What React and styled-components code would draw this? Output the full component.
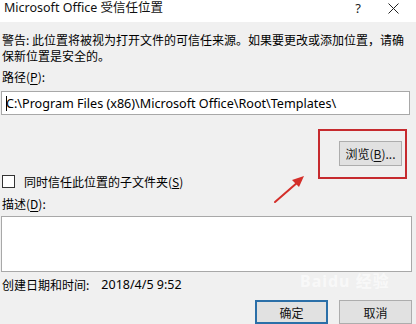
import React from "react";
import styled, { createGlobalStyle } from "styled-components";

const Global = createGlobalStyle`
  html, body { margin: 0; padding: 0; background: #f0f0f0; }
  body { font-family: "Noto Sans", "Noto Sans CJK SC", sans-serif; }
`;

const CJK = `"Noto Sans CJK SC", "Noto Sans", sans-serif`;
const LATIN = `"Noto Sans", "Noto Sans CJK SC", sans-serif`;

const Window = styled.div`
  position: relative;
  width: 416px;
  height: 324px;
  overflow: hidden;
  background: #f0f0f0;
  color: #000;
  font-family: ${CJK};
  font-size: 12px;
`;

const TitleBar = styled.div`
  height: 22px;
  background: #fff;
  display: flex;
  align-items: flex-start;
  padding: 0 0 0 4px;
`;

const Title = styled.div`
  flex: 1;
  font-family: ${LATIN};
  font-size: 12.5px;
  line-height: 16px;
  color: #111;
`;

const HelpButton = styled.div`
  width: 24px;
  text-align: center;
  font-family: ${LATIN};
  font-size: 13px;
  line-height: 16px;
  color: #222;
`;

const CloseButton = styled.div`
  width: 46px;
  height: 16px;
  display: flex;
  align-items: center;
  justify-content: center;
`;

const Body = styled.div`
  display: flex;
  flex-direction: column;
  padding: 0 3px 0 2px;
`;

const Warning = styled.p`
  margin: 10px 8px 0 0;
  line-height: 16px;
  font-size: 12px;
`;

const Label = styled.div`
  margin-top: ${(p) => p.$top}px;
  line-height: 16px;
  font-size: 12px;
  u { text-underline-offset: 2px; }
`;

const PathInput = styled.div`
  margin: 6px 3px 0 -1px;
  height: 22px;
  border: 1px solid #a8a8a8;
  background: #fff;
  display: flex;
  align-items: center;
  padding-left: 4px;
  font-family: ${LATIN};
  font-size: 12.6px;
  white-space: nowrap;
  position: relative;
  &::before {
    content: "";
    position: absolute;
    left: 4px;
    top: 4px;
    width: 1px;
    height: 15px;
    background: #000;
  }
`;

const BrowseRow = styled.div`
  display: flex;
  justify-content: flex-end;
  margin-top: 26px;
  padding-right: 11px;
`;

const Button = styled.div`
  box-sizing: border-box;
  width: ${(p) => p.$w}px;
  height: ${(p) => p.$h}px;
  background: #e1e1e1;
  border: ${(p) => (p.$default ? "2px solid #2b6fa8" : "1px solid #adadad")};
  display: flex;
  align-items: center;
  justify-content: center;
  font-size: 12px;
  color: #111;
  u { text-underline-offset: 2px; }
`;

const CheckRow = styled.div`
  display: flex;
  align-items: center;
  gap: 9px;
  margin-top: 8px;
  height: 14px;
`;

const CheckBox = styled.div`
  width: 11px;
  height: 11px;
  border: 1px solid #333;
  background: #fff;
`;

const DescBox = styled.div`
  margin: 4px 1px 0 -1px;
  height: 54px;
  border: 1px solid #a8a8a8;
  background: #fff;
`;

const Created = styled.div`
  margin-top: 5px;
  line-height: 16px;
  display: flex;
`;

const DateText = styled.span`
  margin-left: 12px;
  font-family: ${LATIN};
  font-size: 12.5px;
`;

const ButtonRow = styled.div`
  display: flex;
  justify-content: flex-end;
  gap: 11px;
  margin-top: 7px;
  padding-right: 1px;
`;

const Highlight = styled.div`
  position: absolute;
  left: 318px;
  top: 129px;
  width: 89px;
  height: 50px;
  box-sizing: border-box;
  border: 2px solid #c62a2e;
  pointer-events: none;
`;

const Arrow = styled.svg`
  position: absolute;
  left: 268px;
  top: 168px;
  pointer-events: none;
`;

const Watermark = styled.div`
  position: absolute;
  left: 300px;
  top: 268px;
  font-family: ${LATIN};
  font-size: 16px;
  font-weight: bold;
  color: rgba(255, 255, 255, 0.6);
  letter-spacing: 1px;
  pointer-events: none;
`;

export default function App() {
  return (
    <>
      <Global />
      <Window>
        <TitleBar>
          <Title>Microsoft Office 受信任位置</Title>
          <HelpButton>?</HelpButton>
          <CloseButton>
            <svg width="11" height="11" viewBox="0 0 11 11">
              <path d="M0.5 0.5 L10.5 10.5 M10.5 0.5 L0.5 10.5" stroke="#222" strokeWidth="1" />
            </svg>
          </CloseButton>
        </TitleBar>
        <Body>
          <Warning>
            警告: 此位置将被视为打开文件的可信任来源。如果要更改或添加位置，请确保新位置是安全的。
          </Warning>
          <Label $top={5}>
            路径(<u>P</u>):
          </Label>
          <PathInput>C:\Program Files (x86)\Microsoft Office\Root\Templates\</PathInput>
          <BrowseRow>
            <Button $w={63} $h={25}>
              浏览(<u>B</u>)...
            </Button>
          </BrowseRow>
          <CheckRow>
            <CheckBox />
            <span>
              同时信任此位置的子文件夹(<u>S</u>)
            </span>
          </CheckRow>
          <Label $top={8}>
            描述(<u>D</u>):
          </Label>
          <DescBox />
          <Created>
            <span>创建日期和时间:</span>
            <DateText>2018/4/5 9:52</DateText>
          </Created>
          <ButtonRow>
            <Button $w={73} $h={24} $default>
              确定
            </Button>
            <Button $w={73} $h={24}>
              取消
            </Button>
          </ButtonRow>
        </Body>
        <Highlight />
        <Arrow width="44" height="42" viewBox="0 0 44 42">
          <line x1="7" y1="34" x2="30" y2="14" stroke="#d42f2a" strokeWidth="2" strokeLinecap="round" />
          <polygon points="36,8 24,12 31,19" fill="#d42f2a" />
        </Arrow>
        <Watermark>Baidu 经验</Watermark>
      </Window>
    </>
  );
}
